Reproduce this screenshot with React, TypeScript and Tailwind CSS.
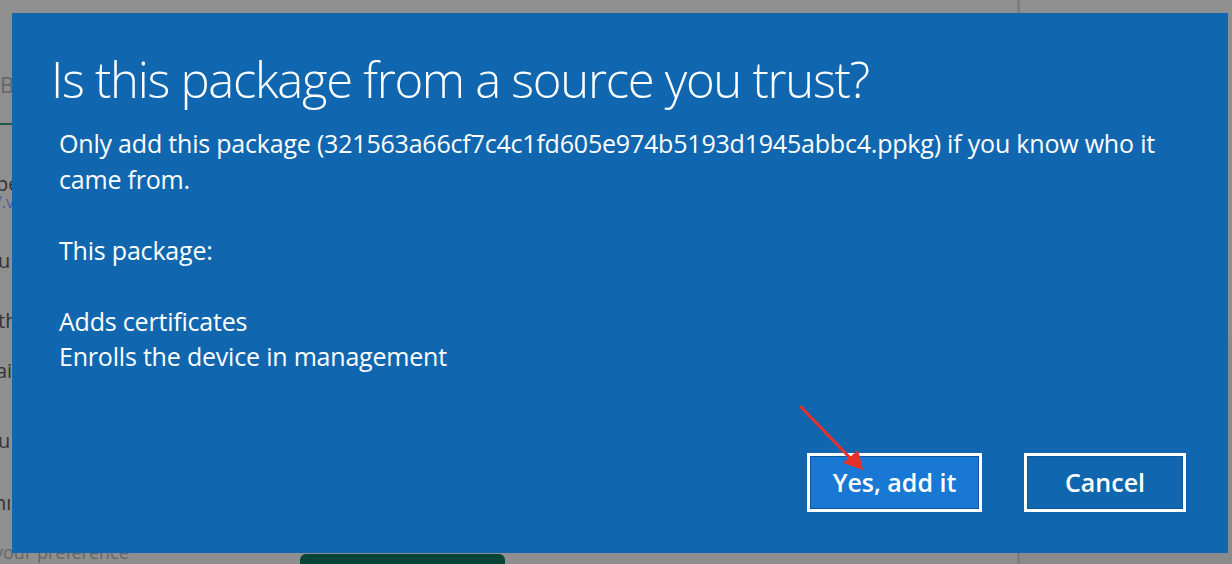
import React from "react";

export default function App() {
  const font = { fontFamily: '"Open Sans", "Noto Sans", "Liberation Sans", sans-serif' };
  return (
    <div className="relative w-[1232px] h-[564px] overflow-hidden bg-[#8f8f8f]" style={font}>
      {/* background page (dimmed) */}
      <div className="flex h-full">
        <div className="flex flex-col w-[300px] text-[#333] text-[20px] leading-none">
          <div className="mt-[73px] text-[22px] text-[#666]">B</div>
          <div className="mt-[28px] h-[2px] w-[40px] bg-[#1f5a3f]"></div>
          <div className="mt-[52px] -ml-[4px] leading-[14px]">pe</div>
          <div className="mt-[4px] -ml-[4px] text-[16px] leading-[14px] text-[#4a5ea0]">/.v</div>
          <div className="mt-[42px] -ml-[2px]">u</div>
          <div className="mt-[40px] -ml-[2px]">th</div>
          <div className="mt-[30px] -ml-[4px]">ai</div>
          <div className="mt-[50px] -ml-[2px]">u</div>
          <div className="mt-[42px] -ml-[6px]">nı</div>
          <div className="mt-[30px] -ml-[6px] text-[18px] text-[#666]">your preference</div>
        </div>
        <div className="flex-1 flex flex-col">
          <div className="flex-1"></div>
          <div className="w-[205px] h-[10px] rounded-t-[6px] bg-[#064537]"></div>
        </div>
        <div className="w-[215px] border-l-[3px] border-[#7d7d7d] flex flex-col">
          <div className="flex-1"></div>
          <div className="h-[227px] bg-[#8a8a8a]"></div>
        </div>
      </div>

      {/* dialog */}
      <div className="absolute left-[12px] top-[13px] w-[1216px] h-[540px] bg-[#1067b0] text-white flex flex-col pt-[36px] pl-[39px] pr-[42px] pb-[41px]">
        <h1 className="text-[49px] leading-[60px] font-light whitespace-nowrap tracking-[-1.3px]">
          Is this package from a source you trust?
        </h1>
        <div className="mt-[17px] pl-[8px] text-[25px] leading-[35.5px] whitespace-nowrap tracking-[-0.2px]">
          <div>Only add this package (321563a66cf7c4c1fd605e974b5193d1945abbc4.ppkg) if you know who it</div>
          <div>came from.</div>
          <div className="h-[35.5px]"></div>
          <div>This package:</div>
          <div className="h-[35.5px]"></div>
          <div>Adds certificates</div>
          <div>Enrolls the device in management</div>
        </div>
        <div className="flex-1"></div>
        <div className="flex justify-end gap-[42px]">
          <button className="w-[175px] h-[59px] border-[3px] border-white bg-[#1878d3] shadow-[inset_0_0_0_1px_#0b56a0] text-[25px] font-semibold text-white">
            Yes, add it
          </button>
          <button className="w-[162px] h-[59px] border-[3px] border-white bg-[#1067b0] shadow-[inset_0_0_0_1px_#0b56a0] text-[25px] font-semibold text-white">
            Cancel
          </button>
        </div>
      </div>

      {/* red annotation arrow */}
      <svg className="absolute left-0 top-0" width="1232" height="564" viewBox="0 0 1232 564">
        <line x1="801" y1="407" x2="852" y2="460" stroke="#e8302a" strokeWidth="3" strokeLinecap="round" />
        <polygon points="863,470 843,463 858,450" fill="#e8302a" />
      </svg>
    </div>
  );
}
